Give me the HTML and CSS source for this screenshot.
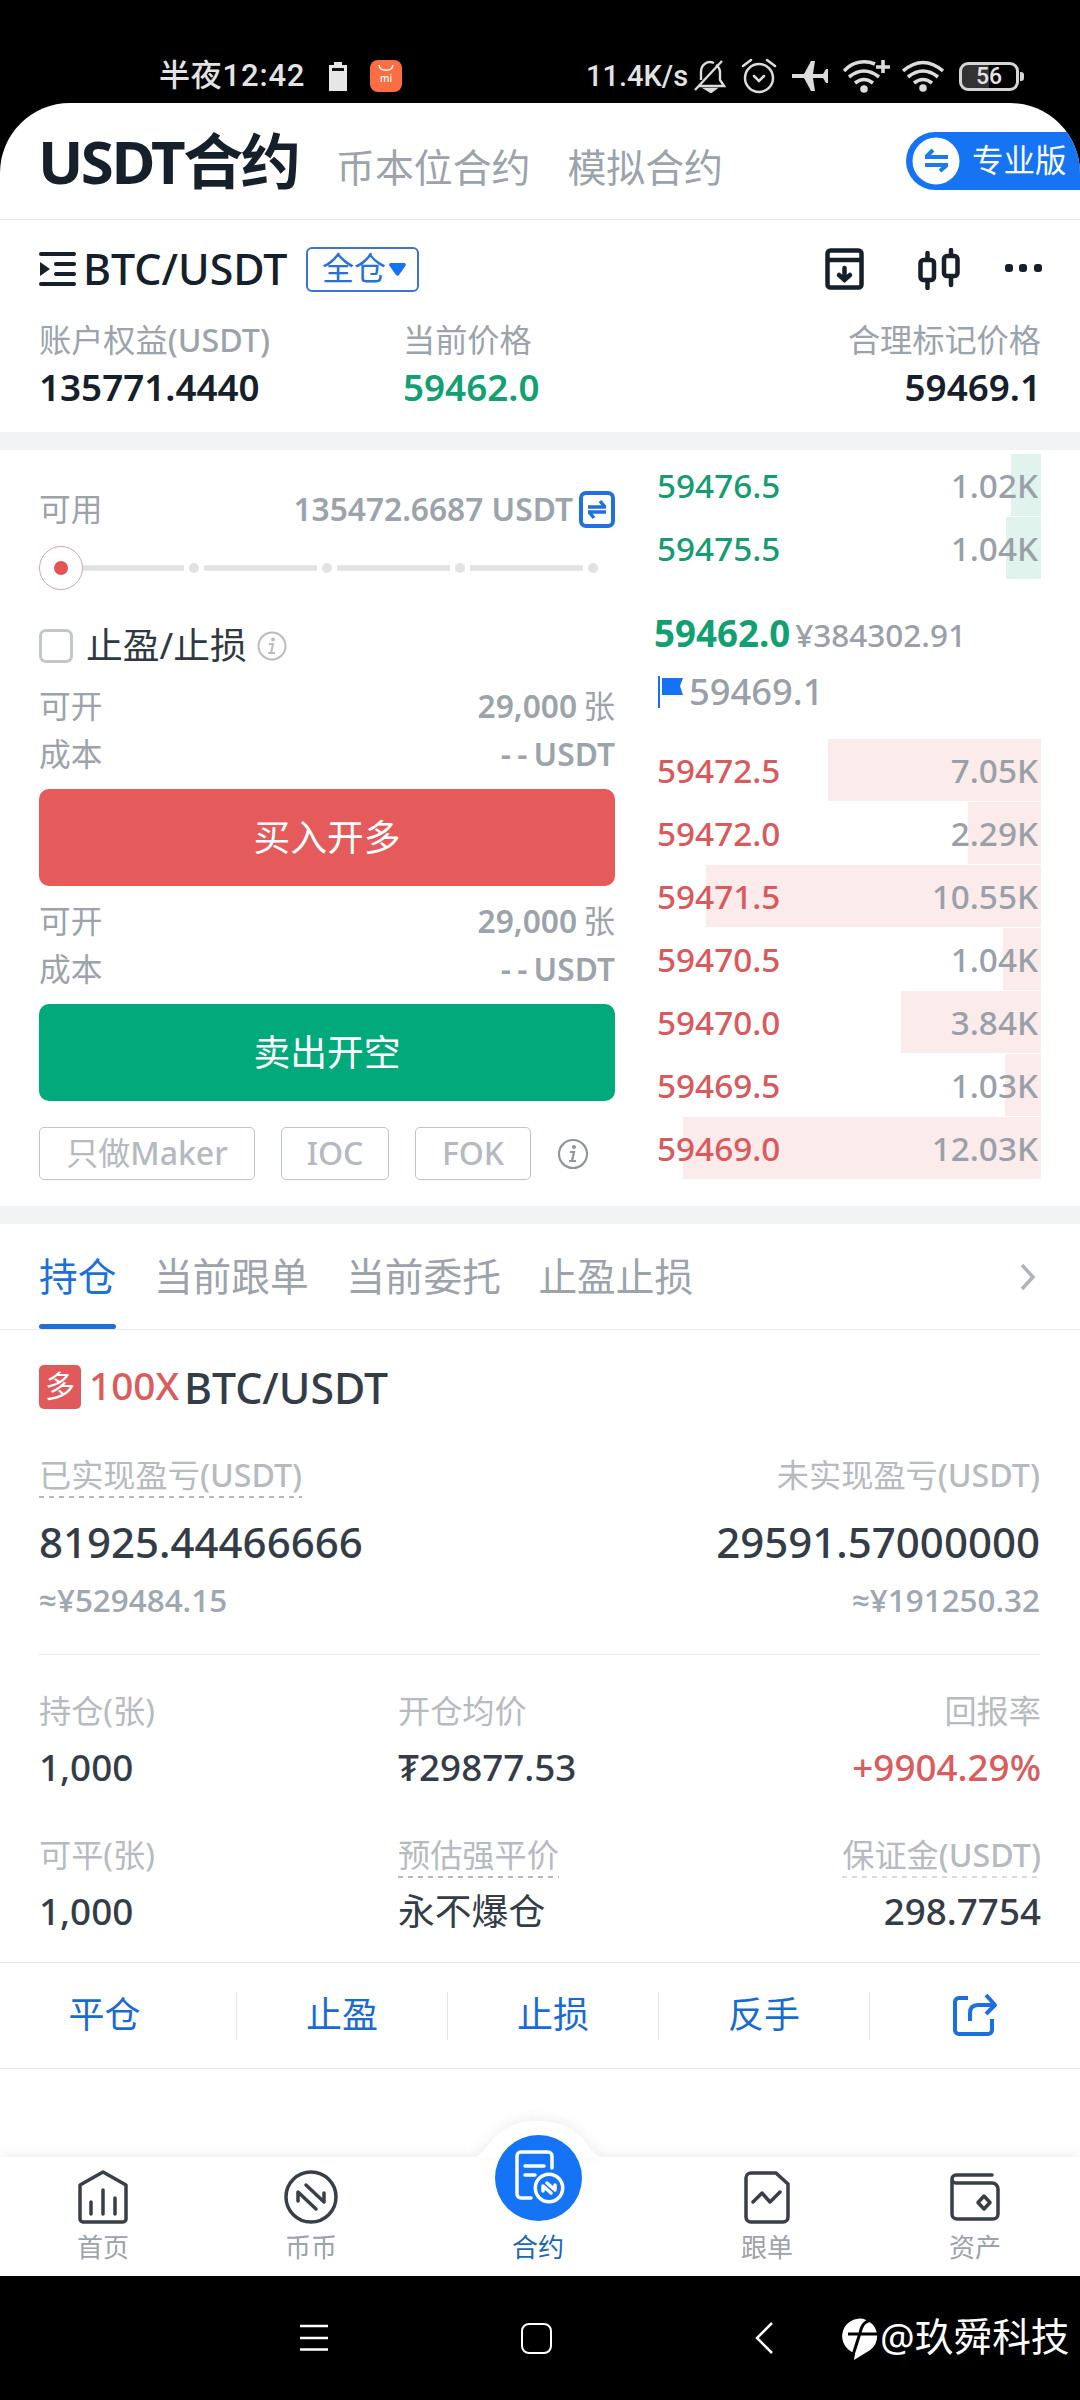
FILE: index.html
```html
<!DOCTYPE html>
<html lang="zh-CN">
<head>
    <meta charset="UTF-8">
    <meta name="viewport" content="width=device-width, initial-scale=1.0">
    <title>USDT合约</title>
    <link rel="stylesheet" href="styles.css">
</head>
<body>
    <div class="status-bar">
        <span class="clock">半夜12:42</span>
        <svg class="st-cell" width="18" height="29" viewBox="0 0 18 29"><path d="M5 0h8v3h5v26H0V3h5z" fill="#e6e6e6"/><path d="M3 6h12v3H3z" fill="#111"/></svg>
        <div class="mi-app">
            <svg width="32" height="32" viewBox="0 0 32 32" fill="none" stroke="#fff" stroke-width="1.5"><path d="M9 5c1 7 13 7 14 0"/></svg>
            <span>mi</span>
        </div>
        <span class="net-speed">11.4K/s</span>
        <div class="status-icons">
            <svg width="32" height="34" viewBox="0 0 32 34" fill="none" stroke="#dcdcdc" stroke-width="2.4"><path d="M1 31 28 2M4 27h26l-4-6V13a9 9 0 0 0-4-7M20 4C13 1 7 6 7 13v8"/><path d="M12 30h9l-4 3z" fill="#dcdcdc"/></svg>
            <svg width="36" height="36" viewBox="0 0 36 36" fill="none" stroke="#dcdcdc" stroke-width="2.5" stroke-linecap="round"><circle cx="18" cy="20" r="14"/><path d="M2 8l8-6M34 8l-8-6M13 18l5 5 5-5"/></svg>
            <svg width="36" height="32" viewBox="0 0 36 32" fill="#dcdcdc"><path d="M0 14h12L19 1h4l-2 13h10l3-5h2v14h-2l-3-5H21l2 13h-4L12 18H0z"/></svg>
            <svg class="wifi-plus" width="47" height="34" viewBox="0 0 47 34" fill="none" stroke="#dcdcdc" stroke-width="3.6"><path d="M1 12C10 2 22 1 32 5M6 18q15-12 30 0M12 24q9-7 18 0M40 1v13M33 8h14"/><circle cx="21" cy="30" r="2" fill="#dcdcdc"/></svg>
            <svg width="42" height="32" viewBox="0 0 42 32" fill="none" stroke="#dcdcdc" stroke-width="3.6"><path d="M1 11q20-17 40 0M6 17q15-12 30 0M12 23q9-7 18 0"/><circle cx="21" cy="28" r="2" fill="#dcdcdc"/></svg>
            <div class="battery"><span>56</span></div>
        </div>
    </div>

    <div class="app">
        <header class="top-tabs">
            <h1>USDT合约</h1>
            <span class="top-tab">币本位合约</span>
            <span class="top-tab">模拟合约</span>
            <div class="pro-btn">
                <svg width="48" height="48" viewBox="0 0 48 48"><circle cx="24" cy="24" r="23.5" fill="#fff"/><path d="M13 20h23M21 13l-7 7M13 28h23M28 34l7-6" fill="none" stroke="#1b7be8" stroke-width="4"/></svg>
                <span>专业版</span>
            </div>
        </header>

        <section class="pair">
            <div class="pair-row">
                <svg class="menu-icon" width="37" height="34" viewBox="0 0 37 34"><path d="M2 2h33M17 12h18M17 22h18M2 32h33" stroke="#15202b" stroke-width="4" stroke-linecap="round"/><path d="M1 10l10 7-10 7z" fill="#15202b"/></svg>
                <span class="pair-name">BTC/USDT</span>
                <div class="margin-mode"><span>全仓</span><svg width="17" height="13" viewBox="0 0 17 13"><path d="M1 0h15l1 2-7 10q-1.500 1.500-3 0L0 2z" fill="#1472f5"/></svg></div>
                <div class="pair-tools">
                    <svg width="39" height="42" viewBox="0 0 39 42" fill="none" stroke="#15202b" stroke-width="4.500" stroke-linecap="round"><rect x="2.500" y="2.500" width="34" height="37" rx="3"/><path d="M3 12h33M19.500 20v11M14 27l5.500 5 5.500-5"/></svg>
                    <svg width="43" height="42" viewBox="0 0 43 42" fill="none" stroke="#15202b" stroke-width="4.500" stroke-linecap="round"><rect x="2.500" y="12" width="13.500" height="20" rx="3"/><path d="M9.500 5v6M9.500 33v7"/><rect x="26" y="8" width="13.500" height="20" rx="3"/><path d="M33 2v5M33 29v8"/></svg>
                    <svg width="38" height="42" viewBox="0 0 38 42" fill="#15202b"><rect x="1" y="16" width="8" height="8" rx="3"/><rect x="15" y="16" width="8" height="8" rx="3"/><rect x="30" y="16" width="8" height="8" rx="3"/></svg>
                </div>
            </div>
            <div class="pair-stats">
                <div>
                    <p class="stat-label">账户权益<em>(USDT)</em></p>
                    <p class="stat-value">135771.4440</p>
                </div>
                <div>
                    <p class="stat-label">当前价格</p>
                    <p class="stat-value green">59462.0</p>
                </div>
                <div class="right">
                    <p class="stat-label">合理标记价格</p>
                    <p class="stat-value">59469.1</p>
                </div>
            </div>
        </section>

        <section class="trade">
            <div class="order-form">
                <div class="line available">
                    <span>可用</span>
                    <span class="num"><em>135472.6687 USDT</em>
                        <svg width="36" height="37" viewBox="0 0 36 37" fill="none" stroke="#1f72dc"><rect x="2" y="2" width="32" height="33" rx="5" stroke-width="4"/><path d="M9 16h18M21 10l5 6M27 21H9M15 27l-5-6" stroke-width="3.500"/></svg>
                    </span>
                </div>
                <svg class="slider" width="576" height="46" viewBox="0 0 576 46">
                    <path d="M44 23h101M165 23h113M298 23h113M431 23h113" stroke="#e2e2e3" stroke-width="5.500"/>
                    <g fill="#e2e2e3"><circle cx="155" cy="23" r="5"/><circle cx="288" cy="23" r="5"/><circle cx="421" cy="23" r="5"/><circle cx="554" cy="23" r="5"/></g>
                    <circle cx="22" cy="23" r="21.500" fill="#fff" stroke="#d9a5a8"/>
                    <circle cx="22" cy="23" r="7" fill="#e45454"/>
                </svg>
                <div class="tpsl">
                    <i class="checkbox"></i>
                    <span>止盈/止损</span>
                    <svg width="30" height="30" viewBox="0 0 30 30" fill="none" stroke="#b9bcc0" stroke-width="2"><circle cx="15" cy="15" r="13.500"/><path d="M12 13h4l-2 9M11 22h7"/><circle cx="16" cy="8.500" r="1" fill="#b9bcc0"/></svg>
                </div>
                <div class="line"><span>可开</span><span class="num"><em>29,000</em> 张</span></div>
                <div class="line"><span>成本</span><span class="num"><em>- - USDT</em></span></div>
                <button class="buy">买入开多</button>
                <div class="line"><span>可开</span><span class="num"><em>29,000</em> 张</span></div>
                <div class="line"><span>成本</span><span class="num"><em>- - USDT</em></span></div>
                <button class="sell">卖出开空</button>
                <div class="order-types">
                    <span class="chip maker">只做<em>Maker</em></span>
                    <span class="chip ioc"><em>IOC</em></span>
                    <span class="chip fok"><em>FOK</em></span>
                    <svg width="32" height="32" viewBox="0 0 32 32" fill="none" stroke="#8f969d" stroke-width="2.200"><circle cx="16" cy="16" r="14"/><path d="M13 14h4l-2 9M12 23h7"/><circle cx="17" cy="9" r="1" fill="#8f969d"/></svg>
                </div>
            </div>

            <div class="order-book">
                <div class="depth up"><i style="width: 30px"></i><span>59476.5</span><b>1.02K</b></div>
                <div class="depth up"><i style="width: 35px"></i><span>59475.5</span><b>1.04K</b></div>
                <div class="last-price"><strong>59462.0</strong><span>¥384302.91</span></div>
                <div class="mark-price">
                    <svg width="26" height="32" viewBox="0 0 26 32"><path d="M0 0h2v32H0zM4 2h21l-3 8 3 9H4z" fill="#1472f5"/></svg>
                    <span>59469.1</span>
                </div>
                <div class="depth down"><i style="width: 213px"></i><span>59472.5</span><b>7.05K</b></div>
                <div class="depth down"><i style="width: 73px"></i><span>59472.0</span><b>2.29K</b></div>
                <div class="depth down"><i style="width: 335px"></i><span>59471.5</span><b>10.55K</b></div>
                <div class="depth down"><i style="width: 38px"></i><span>59470.5</span><b>1.04K</b></div>
                <div class="depth down"><i style="width: 140px"></i><span>59470.0</span><b>3.84K</b></div>
                <div class="depth down"><i style="width: 36px"></i><span>59469.5</span><b>1.03K</b></div>
                <div class="depth down"><i style="width: 358px"></i><span>59469.0</span><b>12.03K</b></div>
            </div>
        </section>

        <section class="positions">
            <div class="tabs">
                <span class="tab active">持仓</span>
                <span class="tab">当前跟单</span>
                <span class="tab">当前委托</span>
                <span class="tab">止盈止损</span>
                <svg width="18" height="28" viewBox="0 0 18 28" fill="none" stroke="#b0b4b9" stroke-width="3.500"><path d="M3 2l11 12L3 26"/></svg>
            </div>
            <div class="position-title">
                <span class="side">多</span>
                <span class="lever">100X</span>
                <span class="symbol">BTC/USDT</span>
            </div>
            <div class="pnl">
                <div>
                    <p class="label"><span class="dashed">已实现盈亏<em>(USDT)</em></span></p>
                    <p class="pnl-value">81925.44466666</p>
                    <p class="approx">≈¥529484.15</p>
                </div>
                <div class="right">
                    <p class="label">未实现盈亏<em>(USDT)</em></p>
                    <p class="pnl-value">29591.57000000</p>
                    <p class="approx">≈¥191250.32</p>
                </div>
            </div>
            <div class="details">
                <div><p class="label">持仓(张)</p><p class="value">1,000</p></div>
                <div><p class="label">开仓均价</p><p class="value">₮29877.53</p></div>
                <div class="right"><p class="label">回报率</p><p class="value red">+9904.29%</p></div>
                <div><p class="label">可平(张)</p><p class="value">1,000</p></div>
                <div><p class="label"><span class="dashed">预估强平价</span></p><p class="value cn">永不爆仓</p></div>
                <div class="right"><p class="label"><span class="dashed light">保证金<em>(USDT)</em></span></p><p class="value">298.7754</p></div>
            </div>
            <div class="actions">
                <span>平仓</span>
                <span>止盈</span>
                <span>止损</span>
                <span>反手</span>
                <span><svg width="46" height="44" viewBox="0 0 46 44" fill="none" stroke="#1a70dc" stroke-width="4" stroke-linejoin="round"><path d="M16 5H7a4 4 0 0 0-4 4v28a4 4 0 0 0 4 4h29a4 4 0 0 0 4-4V26"/><path d="M18 28v-8c0-6 3-8 8-8h17M34 2l9 10-9 9"/></svg></span>
            </div>
        </section>

        <nav class="bottom-nav">
            <svg class="nav-bg" width="1080" height="50" viewBox="0 0 1080 50">
                <path d="M0 50V50H470C490 50 488 13 538 13S586 50 606 50H1080z" fill="#fff"/>
            </svg>
            <div class="nav-item">
                <svg width="50" height="54" viewBox="0 0 50 54" fill="none" stroke="#373f47" stroke-width="3.500" stroke-linecap="round" stroke-linejoin="round"><path d="M2 15 25 2l23 13v34a3 3 0 0 1-3 3H5a3 3 0 0 1-3-3zM13 32v12M25 20v24M37 28v16"/></svg>
                <span>首页</span>
            </div>
            <div class="nav-item">
                <svg width="54" height="54" viewBox="0 0 54 54" fill="none" stroke="#373f47" stroke-width="3.500" stroke-linecap="round" stroke-linejoin="round"><circle cx="27" cy="27" r="25"/><path d="M14 31v-9l18 17M22 15l18 17v-9"/></svg>
                <span>币币</span>
            </div>
            <div class="nav-item current">
                <div class="fab">
                    <svg width="50" height="54" viewBox="0 0 50 54" fill="none" stroke="#fff" stroke-width="3.500" stroke-linecap="round"><path d="M16 48H6a4 4 0 0 1-4-4V6a4 4 0 0 1 4-4h27a4 4 0 0 1 4 4v12M10 16h19M10 25h10"/><circle cx="34" cy="38" r="13.700"/><path d="M28 41v-5l8 7M32 33l8 7v-5" stroke-linejoin="round"/></svg>
                </div>
                <span>合约</span>
            </div>
            <div class="nav-item">
                <svg width="46" height="54" viewBox="0 0 46 54" fill="none" stroke="#373f47" stroke-width="3.500" stroke-linecap="round" stroke-linejoin="round"><path d="M7 3h25l12 11v33a5 5 0 0 1-5 5H7a5 5 0 0 1-5-5V8a5 5 0 0 1 5-5zM9 32l9-9 8 9 10-10"/></svg>
                <span>跟单</span>
            </div>
            <div class="nav-item">
                <svg width="50" height="54" viewBox="0 0 50 54" fill="none" stroke="#373f47" stroke-width="3.500" stroke-linecap="round" stroke-linejoin="round"><path d="M42 5H6a4 4 0 0 0 0 8h36a6 6 0 0 1 6 6v25a5 5 0 0 1-5 5H7a5 5 0 0 1-5-5V9M34 26l6 6.500-6 6.500-6-6.500z"/></svg>
                <span>资产</span>
            </div>
        </nav>
    </div>

    <div class="system-nav">
        <svg class="sys-menu" width="28" height="28" viewBox="0 0 28 28" stroke="#fff" stroke-width="2.500"><path d="M0 2h28M0 14h28M0 25.500h28"/></svg>
        <i class="sys-home"></i>
        <svg class="sys-back" width="19" height="32" viewBox="0 0 19 32" fill="none" stroke="#fff" stroke-width="2.500"><path d="M17 1 2 16l15 15"/></svg>
        <div class="watermark">
            <svg width="36" height="43" viewBox="0 0 36 43"><path d="M12 43l1-7A17.500 17.500 0 1 1 25 35z" fill="#fff"/><path d="M6 17h30M33 4c-9-2-13 3-15 12L11 38" fill="none" stroke="#000" stroke-width="3"/></svg>
            <span>@玖舜科技</span>
        </div>
    </div>
</body>
</html>
```

FILE: styles.css
```css
* {
    box-sizing: border-box;
}

body {
    margin: 0;
    background-color: #000;
    font-family: "Noto Sans", "Noto Sans CJK SC", sans-serif;
    font-weight: 500;
    color: #15202b;
    width: 1080px;
    height: 2400px;
    overflow: hidden;
}

p, h1 {
    margin: 0;
}

svg {
    display: block;
    flex: none;
}

span, p, h1, strong, b {
    white-space: nowrap;
}

/* latin part of a mixed label, heavier than the chinese */
em {
    font-style: normal;
    font-weight: 500;
}

.right {
    text-align: right;
}

.status-bar {
    height: 103px;
    display: flex;
    align-items: center;
    padding: 49px 56px 0 159px;
    color: #e3e3e3;
}

.clock, .net-speed {
    font-family: Roboto, "Noto Sans CJK SC", sans-serif;
    font-size: 31px;
    line-height: 40px;
}

.clock {
    width: 170px;
    letter-spacing: 0.8px;
}

.mi-app {
    position: relative;
    width: 32px;
    height: 32px;
    margin-left: 23px;
    border-radius: 8px;
    background-color: #fb6e43;
}

.mi-app span {
    position: absolute;
    left: 10px;
    top: 13px;
    font-size: 10px;
    line-height: 10px;
    color: #fff;
}

.net-speed {
    margin-left: 184px;
    width: 108px;
    font-size: 29px;
}

.status-icons {
    display: flex;
    align-items: center;
    gap: 15px;
}

.wifi-plus {
    margin-right: -3px;
}

.battery {
    position: relative;
    width: 60px;
    height: 29px;
    border: 3px solid #d5d5d5;
    border-radius: 9px;
    background: linear-gradient(90deg, #333 50%, #000 50%);
    text-align: center;
    font: 500 23px/24px Roboto, sans-serif;
}

.battery::after {
    content: "";
    position: absolute;
    right: -8px;
    top: 7px;
    width: 4px;
    height: 9px;
    border-radius: 0 3px 3px 0;
    background-color: #d5d5d5;
}

.app {
    height: 2173px;
    background-color: #fff;
    border-radius: 70px 70px 0 0;
    overflow: hidden;
}

.top-tabs {
    height: 117px;
    display: flex;
    align-items: flex-start;
    padding-left: 38px;
    border-bottom: 1px solid #e4e6e8;
}

.top-tabs h1 {
    font-size: 60px;
    line-height: 116px;
    font-weight: 700;
    letter-spacing: -2.500px;
    width: 298px;
}

.top-tab {
    font-size: 38.900px;
    line-height: 128px;
    font-weight: 400;
    color: #9ba3ab;
    margin-right: 37px;
}

.pro-btn {
    display: flex;
    align-items: center;
    gap: 12px;
    margin: 29px 0 0 auto;
    padding-left: 6px;
    width: 174px;
    height: 58px;
    border-radius: 29px 0 0 29px;
    background-color: #1674f3;
    color: #fff;
    font-size: 31.500px;
    line-height: 54px;
    font-weight: 400;
}

.pro-btn span {
    padding-bottom: 2px;
}

.pair {
    height: 212px;
    padding: 23px 39px 0;
}

.pair-row {
    display: flex;
    align-items: center;
    height: 52px;
}

.pair-name {
    margin-left: 7px;
    font-size: 42.900px;
    line-height: 52px;
    width: 223px;
}

.margin-mode {
    display: flex;
    align-items: center;
    gap: 3px;
    width: 113px;
    height: 45px;
    padding-left: 14px;
    border: 2px solid #3b75cf;
    border-radius: 6px;
    color: #2a70d8;
    font-size: 32px;
    line-height: 40px;
    font-weight: 400;
}

.margin-mode span {
    padding-bottom: 2px;
}

.pair-tools {
    display: flex;
    margin-left: auto;
}

.pair-tools svg {
    margin-left: 54px;
}

.pair-tools svg:last-child {
    margin-left: 43px;
    margin-right: -1px;
}

.pair-stats {
    display: grid;
    grid-template-columns: 364px 1fr 1fr;
    margin-top: 21px;
}

.stat-label {
    font-size: 32.200px;
    line-height: 48px;
    color: #9ba3ab;
    font-weight: 400;
}

.stat-value {
    font-size: 36.800px;
    line-height: 46px;
    font-weight: 600;
}

.green {
    color: #12a073;
}

.red {
    color: #dc5b5c;
}

.trade {
    display: flex;
    height: 792px;
    border-top: 18px solid #f1f3f5;
    border-bottom: 18px solid #f1f3f5;
    padding-left: 39px;
}

.order-form {
    width: 576px;
    padding-top: 35px;
}

.line {
    display: flex;
    justify-content: space-between;
    height: 48px;
    font-size: 31.700px;
    line-height: 48px;
    font-weight: 400;
    color: #9ba3ab;
}

.num em {
    font-weight: 600;
}

.num {
    word-spacing: -2px;
}

.available .num {
    display: flex;
    align-items: center;
    gap: 6px;
    word-spacing: 0;
}

.slider {
    margin: 12px 0 25px;
}

.tpsl {
    display: flex;
    align-items: center;
    height: 60px;
    margin-bottom: 6px;
    font-size: 36.800px;
    line-height: 50px;
    font-weight: 400;
    color: #303941;
}

.checkbox {
    width: 34px;
    height: 34px;
    margin-right: 13px;
    border: 3.500px solid #c4c7ca;
    border-radius: 7px;
}

.tpsl span {
    padding-bottom: 3px;
}

.tpsl svg {
    margin-left: 10px;
}

.order-form button {
    display: block;
    width: 576px;
    height: 97px;
    margin: 11px 0;
    padding: 0 0 5px;
    border: none;
    border-radius: 10px;
    color: #fff;
    font: 400 36.800px "Noto Sans CJK SC", sans-serif;
}

.order-form .buy {
    background-color: #e55a5a;
}

.order-form .sell {
    background-color: #02aa7b;
    margin-bottom: 26px;
}

.order-types {
    display: flex;
    align-items: center;
    gap: 26px;
}

.chip {
    height: 53px;
    border: 1.500px solid #bfc4c9;
    border-radius: 5px;
    color: #b4babf;
    font-size: 32px;
    font-weight: 400;
    line-height: 50px;
    text-align: center;
}

.maker { width: 216px; }
.ioc { width: 108px; }
.fok { width: 116px; }

.order-book {
    width: 386px;
    margin-left: 40px;
    padding-top: 4px;
}

.depth {
    position: relative;
    display: flex;
    justify-content: space-between;
    height: 63px;
    padding: 0 3px 0 2px;
    font-size: 33.300px;
    line-height: 62px;
}

.depth i {
    position: absolute;
    right: 0;
    top: 0;
    height: 62px;
}

.depth span, .depth b {
    position: relative;
    font-weight: 500;
}

.depth b {
    color: #99a0a8;
}

.up i { background-color: #e0f4ed; }
.up span { color: #169c72; }
.down i { background-color: #fcebeb; }
.down span { color: #d9595c; }

.last-price {
    display: flex;
    align-items: baseline;
    gap: 5px;
    height: 59px;
    margin-top: 25px;
    margin-left: -1px;
    font-size: 31.500px;
    line-height: 56px;
    color: #99a0a8;
}

.last-price strong {
    font-size: 36.700px;
    color: #12a073;
}

.mark-price {
    display: flex;
    align-items: center;
    gap: 5px;
    height: 58px;
    margin-bottom: 17px;
    padding-left: 3px;
    font-size: 36.300px;
    line-height: 50px;
    color: #99a0a8;
}

.mark-price span {
    padding-bottom: 4px;
}

.mark-price svg {
    margin-bottom: 2px;
}

.tabs {
    position: relative;
    display: flex;
    align-items: center;
    gap: 37.500px;
    height: 106px;
    padding: 0 43px 0 39px;
    border-bottom: 1px solid #e7e9eb;
    font-size: 38.700px;
    font-weight: 400;
    color: #9ba3ab;
}

.tab {
    line-height: 105px;
    height: 105px;
}

.tab.active {
    color: #1c70dc;
    position: relative;
}

.tab.active::after {
    content: "";
    position: absolute;
    left: 0;
    right: 0;
    bottom: 0;
    height: 5px;
    border-radius: 3px;
    background-color: #226fd4;
}

.tabs svg {
    margin-left: auto;
}

.position-title {
    display: flex;
    align-items: center;
    height: 114px;
    padding-left: 39px;
}

.side {
    width: 42px;
    height: 44px;
    border-radius: 5px;
    background-color: #e05a5b;
    color: #fff;
    font-size: 30px;
    font-weight: 400;
    line-height: 42px;
    text-align: center;
}

.lever {
    width: 95px;
    margin-left: 8px;
    padding-bottom: 4px;
    font-size: 38.700px;
    color: #dc5b5c;
}

.symbol {
    font-size: 42.800px;
    color: #343d47;
}

.pnl {
    display: flex;
    justify-content: space-between;
    height: 211px;
    margin: 0 40px 0 39px;
    padding-top: 7px;
    border-bottom: 1px solid #e9ebed;
}

.label {
    font-size: 32.200px;
    line-height: 48px;
    font-weight: 400;
    color: #b6bbc0;
}

.dashed {
    display: inline-block;
    background: repeating-linear-gradient(90deg, #b9b9b9 0 5px, transparent 5px 10px) left bottom 1px / 100% 2px no-repeat;
}

.dashed.light {
    background-image: repeating-linear-gradient(90deg, #dcdcdc 0 5px, transparent 5px 10px);
}

.pnl-value {
    margin-top: 13px;
    font-size: 42px;
    line-height: 60px;
    color: #343d47;
}

.approx {
    margin-top: 6px;
    font-family: "Open Sans", "Noto Sans", sans-serif;
    font-size: 31.400px;
    font-weight: 600;
    line-height: 43px;
    color: #9fa8b0;
}

.details {
    display: grid;
    grid-template-columns: 359px 300px 1fr;
    grid-auto-rows: 144px;
    height: 307px;
    padding: 32px 39px 0;
}

.value {
    margin-top: 8px;
    font-size: 36.800px;
    line-height: 48px;
    color: #343d47;
}

.value.cn {
    font-weight: 400;
}

.value.red {
    color: #dc5b5c;
}

.actions {
    display: flex;
    align-items: center;
    height: 107px;
    border-top: 1px solid #e4e6e8;
    border-bottom: 1px solid #e4e6e8;
    font-size: 36px;
    line-height: 44px;
    font-weight: 400;
    color: #1a6bd0;
}

.actions span {
    display: flex;
    align-items: center;
    justify-content: center;
    width: 211px;
    height: 48px;
    padding-bottom: 1px;
    border-left: 1px solid #e3e5e8;
}

.actions span:first-child {
    width: 236px;
    padding-right: 27px;
    border-left: none;
}

.bottom-nav {
    position: relative;
    height: 119px;
    margin-top: 88px;
    background-color: #fff;
    box-shadow: 0 -2px 14px rgba(0, 0, 0, 0.07);
}

.nav-bg {
    position: absolute;
    left: 0;
    top: -49px;
    filter: drop-shadow(0 -3px 6px rgba(0, 0, 0, 0.06));
}

.nav-item {
    position: absolute;
    top: 13px;
    display: flex;
    flex-direction: column;
    align-items: center;
    width: 120px;
    font-size: 26px;
    font-weight: 400;
    line-height: 36px;
    color: #9ba3ab;
}

.nav-item > svg {
    margin-bottom: 5px;
}

.nav-item:nth-of-type(1) { left: 43px; }
.nav-item:nth-of-type(2) { left: 251px; }
.nav-item:nth-of-type(3) { left: 478px; }
.nav-item:nth-of-type(4) { left: 707px; }
.nav-item:nth-of-type(5) { left: 915px; }

.nav-item.current {
    top: -22px;
    color: #1c66b8;
}

.fab {
    width: 87px;
    height: 86px;
    margin-bottom: 8px;
    padding: 15px 0 0 20px;
    border-radius: 50%;
    background-color: #1474f5;
}

.system-nav {
    display: flex;
    align-items: center;
    height: 124px;
    padding-left: 300px;
}

.sys-home {
    width: 31px;
    height: 31px;
    margin-left: 193px;
    border: 2.500px solid #fff;
    border-radius: 8px;
}

.sys-back {
    margin-left: 203px;
}

.watermark {
    display: flex;
    align-items: center;
    gap: 2px;
    margin-left: 68px;
    color: #fff;
    font-size: 38.700px;
    line-height: 50px;
    font-weight: 400;
}

.watermark span {
    padding-bottom: 4px;
}
```
